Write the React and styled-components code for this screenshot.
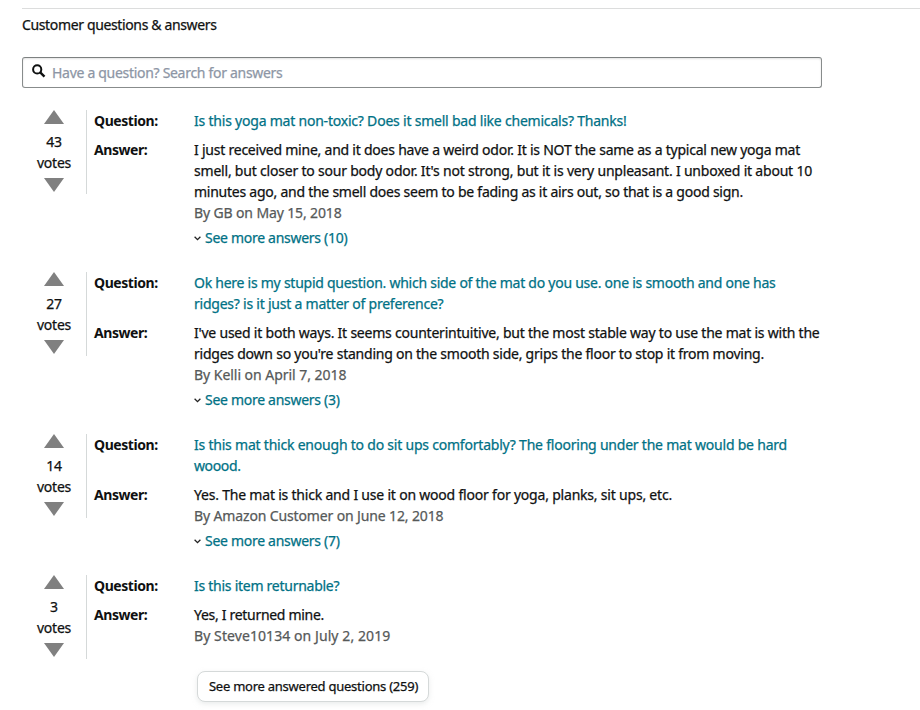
import React from 'react';
import styled, { createGlobalStyle } from 'styled-components';

const GlobalStyle = createGlobalStyle`
  body {
    margin: 0;
    background: #fff;
    color: #0f1111;
    font: 14px/21px 'Noto Sans', 'Open Sans', sans-serif;
    -webkit-text-stroke: 0.25px currentColor;
  }
  * { box-sizing: border-box; }
`;

const Page = styled.main`
  height: 710px;
  padding: 8px 0 0 22px;
  overflow: hidden;
`;

const Rule = styled.hr`
  height: 1px;
  margin: 0;
  border: 0;
  background: #dcdddd;
`;

const Title = styled.h2`
  margin: 5px 0 22px;
  font-size: 14px;
  font-weight: 400;
  line-height: 21px;
  letter-spacing: -0.362px;
`;

const SearchBox = styled.label`
  display: flex;
  align-items: center;
  width: 800px;
  height: 31px;
  margin-bottom: 22px;
  padding-left: 9px;
  border: 1px solid #888c8c;
  border-top-color: #7d8181;
  border-radius: 3px;
  box-shadow: 0 1px 2px rgba(15, 17, 17, 0.12) inset;
`;

const SearchIcon = styled.svg`
  width: 14px;
  height: 14px;
  margin: -3px 6px 0 0;
`;

const SearchInput = styled.input`
  flex: 1;
  height: 27px;
  padding: 0;
  border: 0;
  outline: 0;
  background: transparent;
  color: #0f1111;
  font: inherit;
  letter-spacing: -0.3px;
  -webkit-text-stroke: 0.25px #8d96a5;
  &::placeholder { color: #8d96a5; opacity: 1; }
`;

const QuestionList = styled.div`
  display: flex;
  flex-direction: column;
  gap: 24px;
`;

const Item = styled.article`
  display: flex;
  align-items: flex-start;
`;

const VoteColumn = styled.div`
  display: flex;
  flex-direction: column;
  align-items: center;
  width: 65px;
  height: 84px;
  border-right: 1px solid #d5d9d9;
  letter-spacing: -0.248px;
`;

const VoteArrow = styled.svg`
  width: 20px;
  height: 14px;
  margin: ${p => (p.$down ? '5px 0 0' : '0 0 7px')};
  transform: ${p => (p.$down ? 'scaleY(-1)' : 'none')};
  fill: #808080;
`;

const Entry = styled.div`
  display: grid;
  grid-template-columns: 100px 1fr;
  row-gap: 8px;
  padding-left: 7px;
`;

const Label = styled.strong`
  font-weight: 700;
  letter-spacing: -0.43px;
  -webkit-text-stroke: 0;
`;

const TextLine = styled.span`
  display: block;
  height: 21px;
  white-space: nowrap;
  letter-spacing: ${p => p.$track}px;
`;

const QuestionLink = styled.a`
  color: #007185;
`;

const Author = styled(TextLine)`
  color: #565959;
`;

const MoreLink = styled.a`
  display: flex;
  align-items: center;
  margin-top: 4px;
  color: #007185;
`;

const Chevron = styled.svg`
  width: 7px;
  height: 5px;
  margin: 2px 4px 0 0;
  fill: none;
  stroke: #222;
  stroke-width: 1.3;
`;

const MoreButton = styled.button`
  display: block;
  width: 232px;
  height: 31px;
  margin: 12px 0 0 175px;
  padding: 0 0 1px 1px;
  border: 1px solid #d5d9d9;
  border-radius: 8px;
  background: #fff;
  box-shadow: 0 2px 5px rgba(213, 217, 217, 0.5);
  color: #0f1111;
  font: 13px/29px 'Noto Sans', 'Open Sans', sans-serif;
  letter-spacing: -0.245px;
  white-space: nowrap;
`;

// Each text line carries its own letter spacing.
const items = [
  {
    votes: 43,
    question: [['Is this yoga mat non-toxic? Does it smell bad like chemicals? Thanks!', -0.213]],
    answer: [
      ['I just received mine, and it does have a weird odor. It is NOT the same as a typical new yoga mat', -0.23],
      ["smell, but closer to sour body odor. It's not strong, but it is very unpleasant. I unboxed it about 10", -0.205],
      ['minutes ago, and the smell does seem to be fading as it airs out, so that is a good sign.', -0.249],
    ],
    author: ['By GB on May 15, 2018', -0.13],
    more: 10,
  },
  {
    votes: 27,
    question: [
      ['Ok here is my stupid question. which side of the mat do you use. one is smooth and one has', -0.256],
      ['ridges? is it just a matter of preference?', -0.23],
    ],
    answer: [
      ["I've used it both ways. It seems counterintuitive, but the most stable way to use the mat is with the", -0.22],
      ["ridges down so you're standing on the smooth side, grips the floor to stop it from moving.", -0.233],
    ],
    author: ['By Kelli on April 7, 2018', -0.033],
    more: 3,
  },
  {
    votes: 14,
    question: [
      ['Is this mat thick enough to do sit ups comfortably? The flooring under the mat would be hard', -0.215],
      ['woood.', -0.379],
    ],
    answer: [['Yes. The mat is thick and I use it on wood floor for yoga, planks, sit ups, etc.', -0.204]],
    author: ['By Amazon Customer on June 12, 2018', -0.132],
    more: 7,
  },
  {
    votes: 3,
    question: [['Is this item returnable?', -0.265]],
    answer: [['Yes, I returned mine.', -0.299]],
    author: ['By Steve10134 on July 2, 2019', 0.08],
  },
];

const Lines = ({ lines }) =>
  lines.map(([text, track]) => <TextLine key={text} $track={track}>{text}</TextLine>);

const Arrow = ({ down }) => (
  <VoteArrow $down={down} viewBox="0 0 20 14"><path d="M10 0 20 14H0Z" /></VoteArrow>
);

function QuestionItem({ votes, question, answer, author, more }) {
  return (
    <Item>
      <VoteColumn>
        <Arrow />
        <span>{votes}</span>
        <span>votes</span>
        <Arrow down />
      </VoteColumn>
      <Entry>
        <Label>Question:</Label>
        <QuestionLink><Lines lines={question} /></QuestionLink>
        <Label>Answer:</Label>
        <div>
          <Lines lines={answer} />
          <Author $track={author[1]}>{author[0]}</Author>
          {more && (
            <MoreLink>
              <Chevron viewBox="0 0 7 5"><path d="M.6.8 3.5 3.7 6.4.8" /></Chevron>
              <TextLine $track={-0.29}>See more answers ({more})</TextLine>
            </MoreLink>
          )}
        </div>
      </Entry>
    </Item>
  );
}

export default function App() {
  return (
    <Page>
      <GlobalStyle />
      <Rule />
      <Title>Customer questions &amp; answers</Title>
      <SearchBox>
        <SearchIcon viewBox="0 0 14 14" fill="none" stroke="#0f1111">
          <circle cx="5.2" cy="5.4" r="4.1" strokeWidth="2" />
          <path d="m8.2 8.4 4.3 4.3" strokeWidth="2.4" />
        </SearchIcon>
        <SearchInput placeholder="Have a question? Search for answers" />
      </SearchBox>
      <QuestionList>
        {items.map(item => <QuestionItem key={item.votes} {...item} />)}
      </QuestionList>
      <MoreButton>See more answered questions (259)</MoreButton>
    </Page>
  );
}
